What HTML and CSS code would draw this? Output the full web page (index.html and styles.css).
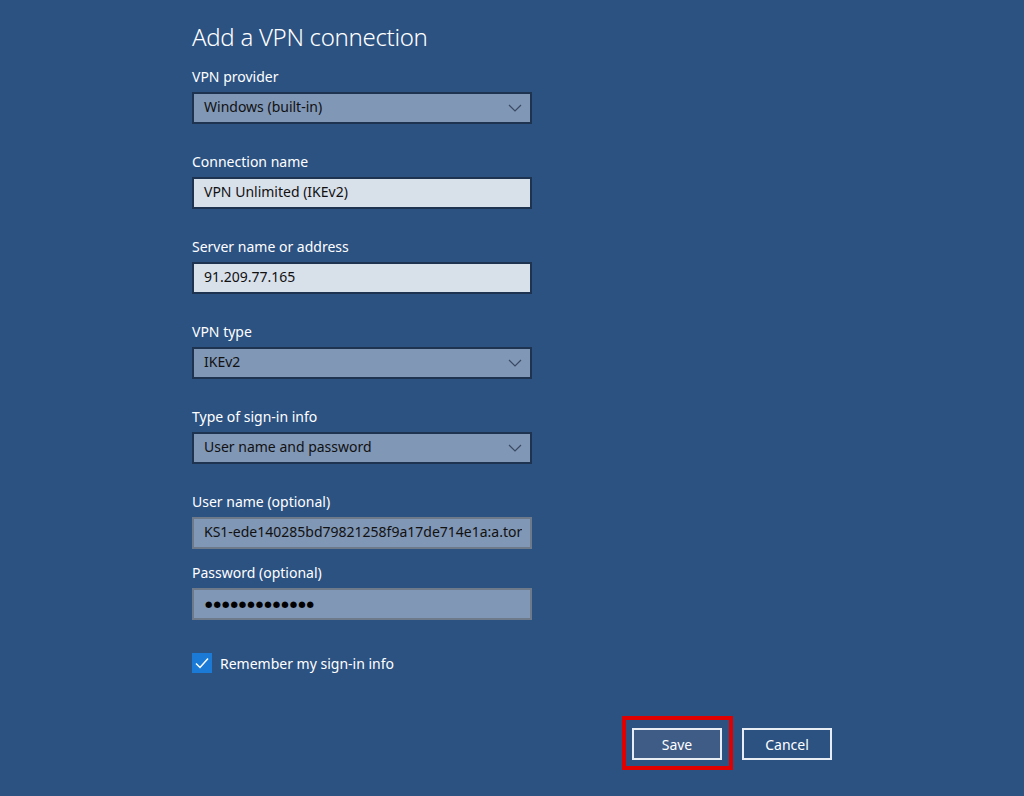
FILE: index.html
```html
<!DOCTYPE html>
<html lang="en">
<head>
<meta charset="utf-8">
<title>Add a VPN connection</title>
<link rel="stylesheet" href="styles.css">
</head>
<body>
<div class="page">
  <h1 class="title">Add a VPN connection</h1>

  <div class="field">
    <div class="label">VPN provider</div>
    <div class="box select">
      <span>Windows (built-in)</span>
      <svg class="chev" width="14" height="8" viewBox="0 0 14 8"><path d="M1 1 L7 7 L13 1" fill="none" stroke="#3b4a63" stroke-width="1.2"/></svg>
    </div>
  </div>

  <div class="field">
    <div class="label">Connection name</div>
    <div class="box text"><span>VPN Unlimited (IKEv2)</span></div>
  </div>

  <div class="field">
    <div class="label">Server name or address</div>
    <div class="box text"><span>91.209.77.165</span></div>
  </div>

  <div class="field">
    <div class="label">VPN type</div>
    <div class="box select">
      <span>IKEv2</span>
      <svg class="chev" width="14" height="8" viewBox="0 0 14 8"><path d="M1 1 L7 7 L13 1" fill="none" stroke="#3b4a63" stroke-width="1.2"/></svg>
    </div>
  </div>

  <div class="field">
    <div class="label">Type of sign-in info</div>
    <div class="box select">
      <span>User name and password</span>
      <svg class="chev" width="14" height="8" viewBox="0 0 14 8"><path d="M1 1 L7 7 L13 1" fill="none" stroke="#3b4a63" stroke-width="1.2"/></svg>
    </div>
  </div>

  <div class="field tight">
    <div class="label">User name (optional)</div>
    <div class="box disabled"><span class="clip">KS1-ede140285bd79821258f9a17de714e1a:a.tor</span></div>
  </div>

  <div class="field">
    <div class="label">Password (optional)</div>
    <div class="box disabled"><span class="dots">●●●●●●●●●●●●●</span></div>
  </div>

  <div class="check-row">
    <span class="checkbox">
      <svg width="20" height="20" viewBox="0 0 20 20"><path d="M4 10.5 L8 14.5 L16 5.5" fill="none" stroke="#ffffff" stroke-width="1.5"/></svg>
    </span>
    <span class="check-label">Remember my sign-in info</span>
  </div>

  <div class="buttons">
    <div class="save-wrap">
      <button class="btn save">Save</button>
      <span class="highlight"></span>
    </div>
    <button class="btn">Cancel</button>
  </div>
</div>
</body>
</html>
```

FILE: styles.css
```css
html, body {
  margin: 0;
  padding: 0;
  background: #2c5282;
  width: 1024px;
  height: 796px;
  overflow: hidden;
}
body {
  font-family: "Noto Sans", "Open Sans", sans-serif;
  color: #ffffff;
}
.page {
  padding: 22px 0 0 192px;
  display: flex;
  flex-direction: column;
}
.title {
  margin: 0 0 15px 0;
  font-size: 24px;
  font-weight: 300;
  line-height: 30px;
  letter-spacing: -0.3px;
}
.field {
  display: flex;
  flex-direction: column;
  margin-bottom: 28px;
}
.field.tight {
  margin-bottom: 14px;
}
.label {
  font-size: 14px;
  line-height: 20px;
  margin-bottom: 5px;
}
.box {
  width: 340px;
  height: 32px;
  box-sizing: border-box;
  border: 2px solid #1e3350;
  display: flex;
  align-items: center;
  justify-content: space-between;
  padding: 0 8px 0 10px;
  font-size: 14px;
  line-height: 20px;
  color: #111111;
}
.box > span {
  position: relative;
  top: -1px;
}
.select {
  background: #8097b6;
}
.text {
  background: #d8e0ea;
}
.disabled {
  background: #8097b6;
  border-color: #6e7a8a;
  overflow: hidden;
}
.clip {
  white-space: nowrap;
  overflow: hidden;
}
.chev {
  display: block;
}
.box .dots {
  font-family: "DejaVu Sans", sans-serif;
  font-size: 8.5px;
  letter-spacing: 1.05px;
  color: #000000;
  top: 0;
  padding-left: 1px;
}
.check-row {
  margin-top: 5px;
  display: flex;
  align-items: center;
  gap: 8px;
}
.checkbox {
  width: 20px;
  height: 20px;
  background: #1a7ad6;
  display: block;
}
.checkbox svg {
  display: block;
}
.check-label {
  font-size: 14px;
}
.buttons {
  margin-top: 55px;
  padding-left: 440px;
  display: flex;
  gap: 20px;
}
.save-wrap {
  position: relative;
}
.btn {
  width: 90px;
  height: 32px;
  box-sizing: border-box;
  border: 2px solid #e8edf3;
  background: transparent;
  color: #ffffff;
  font-family: "Noto Sans", "Open Sans", sans-serif;
  font-size: 14px;
  padding: 0;
}
.btn.save {
  background: #3e5c86;
}
.highlight {
  position: absolute;
  left: -10px;
  top: -12px;
  width: 111px;
  height: 54px;
  box-sizing: border-box;
  border: 4px solid #e00000;
}
```
